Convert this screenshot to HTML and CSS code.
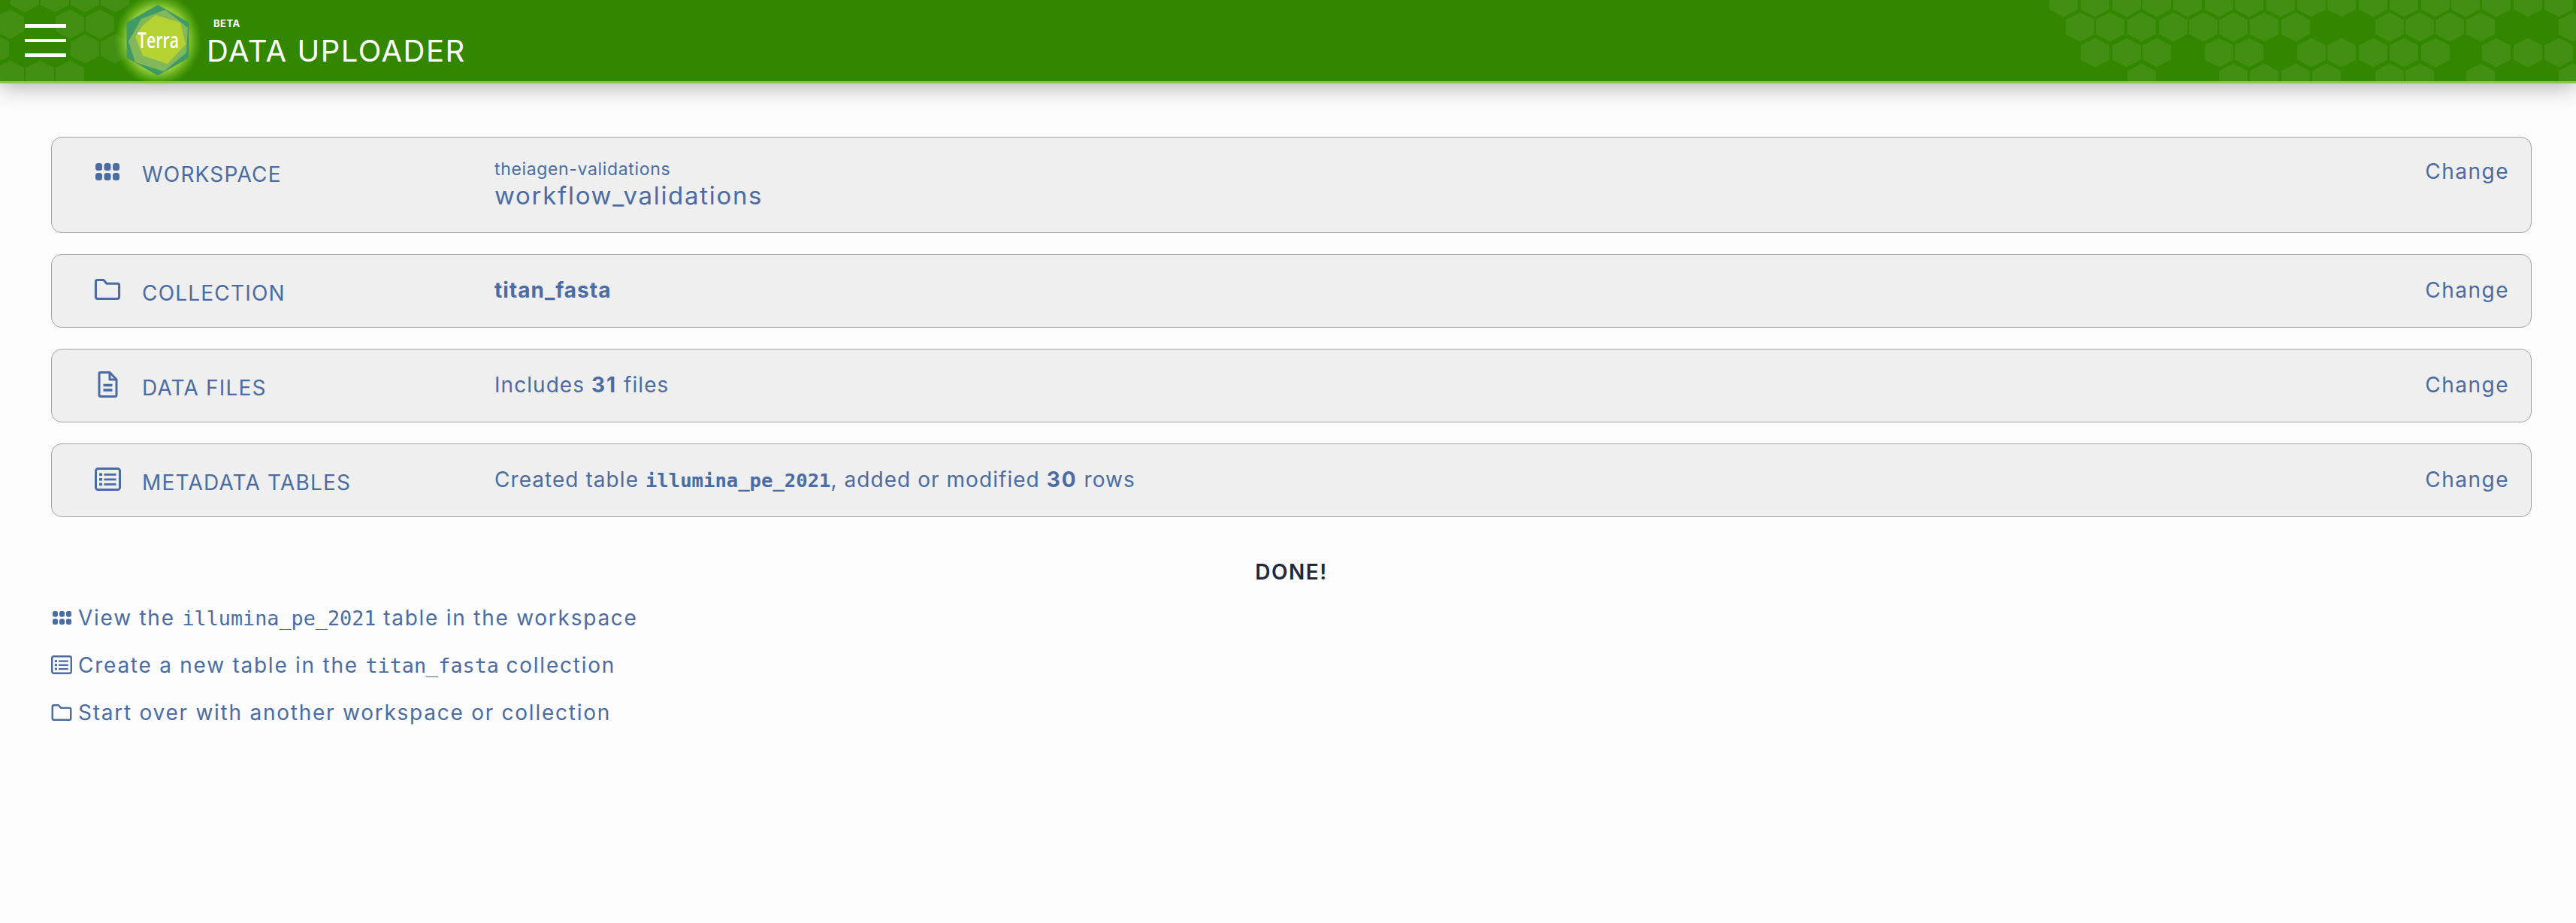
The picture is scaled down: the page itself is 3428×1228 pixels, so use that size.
FILE: index.html
```html
<!DOCTYPE html>
<html lang="en">
<head>
    <meta charset="UTF-8">
    <meta name="viewport" content="width=device-width, initial-scale=1.0">
    <title>Data Uploader</title>
    <link rel="stylesheet" href="styles.css">
</head>
<body>
    <svg class="icon-defs" width="0" height="0">
        <defs>
            <path id="hex" d="M0 -19.5L19 -9.5V9.5L0 19.5L-19 9.5V-9.5Z"/>
            <g id="i-grid">
                <rect x="0" y="0" width="9" height="10" rx="3.5"/><rect x="11.5" y="0" width="9" height="10" rx="3.5"/><rect x="23" y="0" width="9" height="10" rx="3.5"/>
                <rect x="0" y="13" width="9" height="10" rx="3.5"/><rect x="11.5" y="13" width="9" height="10" rx="3.5"/><rect x="23" y="13" width="9" height="10" rx="3.5"/>
            </g>
            <path id="i-folder" fill="none" stroke="currentColor" stroke-width="3" stroke-linejoin="round" d="M2 3.5Q2 1.5 4 1.5H12L16 6H30Q32 6 32 8V23Q32 25.5 30 25.5H4Q2 25.5 2 23Z"/>
            <g id="i-file" fill="none" stroke="currentColor" stroke-width="3" stroke-linejoin="round">
                <path d="M2 3Q2 1.5 3.5 1.5H16L25 11V31.5Q25 33.5 23 33.5H4Q2 33.5 2 31.5Z"/>
                <path d="M16 1.5V11H25"/>
                <path d="M7.5 18.5H19.5M7.5 25H19.5" stroke-width="3.4"/>
            </g>
            <g id="i-list">
                <rect x="1.5" y="1.5" width="32" height="28" rx="3" fill="none" stroke="currentColor" stroke-width="3"/>
                <rect x="6" y="7.5" width="4" height="3.6"/><rect x="6" y="14" width="4" height="3.6"/><rect x="6" y="20.5" width="4" height="3.6"/>
                <rect x="12.5" y="8" width="16" height="2.8"/><rect x="12.5" y="14.5" width="16" height="2.8"/><rect x="12.5" y="21" width="16" height="2.8"/>
            </g>
        </defs>
    </svg>

    <header class="topbar">
        <svg class="hexes hexes-left" viewBox="0 0 260 108" width="260" height="108">
            <use href="#hex" x="33" y="-3"/><use href="#hex" x="73" y="-3"/><use href="#hex" x="113" y="-3"/><use href="#hex" x="153" y="-3"/>
            <use href="#hex" x="13" y="32"/><use href="#hex" x="93" y="32"/><use href="#hex" x="133" y="32"/>
            <use href="#hex" x="-7" y="65"/><use href="#hex" x="113" y="65"/><use href="#hex" x="153" y="65"/>
            <use href="#hex" x="13" y="100"/><use href="#hex" x="53" y="100"/><use href="#hex" x="93" y="100"/>
        </svg>
        <svg class="hexes hexes-right" viewBox="2700 0 728 108" width="728" height="108">
            <use href="#hex" x="2746" y="3"/><use href="#hex" x="2788" y="3"/><use href="#hex" x="2830" y="3"/><use href="#hex" x="2870" y="3"/><use href="#hex" x="2911" y="3"/><use href="#hex" x="2953" y="3"/><use href="#hex" x="2993" y="3"/><use href="#hex" x="3035" y="3"/><use href="#hex" x="3076" y="3"/><use href="#hex" x="3116" y="3"/><use href="#hex" x="3158" y="3"/><use href="#hex" x="3199" y="3"/><use href="#hex" x="3241" y="3"/><use href="#hex" x="3281" y="3"/><use href="#hex" x="3322" y="3"/><use href="#hex" x="3364" y="3"/><use href="#hex" x="3405" y="3"/>
            <use href="#hex" x="2768" y="36"/><use href="#hex" x="2808" y="36"/><use href="#hex" x="2850" y="36"/><use href="#hex" x="2892" y="36"/><use href="#hex" x="2932" y="36"/><use href="#hex" x="2972" y="36"/><use href="#hex" x="3013" y="36"/><use href="#hex" x="3055" y="36"/><use href="#hex" x="3180" y="36"/><use href="#hex" x="3220" y="36"/><use href="#hex" x="3260" y="36"/><use href="#hex" x="3301" y="36"/><use href="#hex" x="3424" y="36"/>
            <use href="#hex" x="2788" y="70"/><use href="#hex" x="2830" y="70"/><use href="#hex" x="2870" y="70"/><use href="#hex" x="2953" y="70"/><use href="#hex" x="2993" y="70"/><use href="#hex" x="3076" y="70"/><use href="#hex" x="3116" y="70"/><use href="#hex" x="3158" y="70"/><use href="#hex" x="3199" y="70"/><use href="#hex" x="3241" y="70"/><use href="#hex" x="3322" y="70"/><use href="#hex" x="3364" y="70"/><use href="#hex" x="3405" y="70"/>
            <use href="#hex" x="2850" y="104"/><use href="#hex" x="2972" y="104"/><use href="#hex" x="3013" y="104"/><use href="#hex" x="3055" y="104"/><use href="#hex" x="3096" y="104"/><use href="#hex" x="3180" y="104"/><use href="#hex" x="3220" y="104"/><use href="#hex" x="3301" y="104"/><use href="#hex" x="3424" y="104"/>
        </svg>

        <button class="menu-button" aria-label="Menu"><span></span><span></span><span></span></button>

        <svg class="logo" viewBox="0 0 104 108" width="104" height="108">
            <defs>
                <radialGradient id="glow">
                    <stop offset="0.7" stop-color="#a9da45" stop-opacity="0.8"/>
                    <stop offset="1" stop-color="#6fc01e" stop-opacity="0"/>
                </radialGradient>
            </defs>
            <ellipse cx="52" cy="53" rx="58" ry="62" fill="url(#glow)"/>
            <path d="M52 8L92 31V76L52 99L12 76V31Z" fill="#3F9A63" stroke="#3F9A63" stroke-width="3" stroke-linejoin="round"/>
            <path d="M30 25L62 13L92 37L90 70L60 95L22 83L13 55Z" fill="#83B85A"/>
            <path d="M32 34L49 20L82 30L89 59L65 85L32 74L22 49Z" fill="#B6D232"/>
            <text x="25" y="64" class="logo-text" textLength="55" lengthAdjust="spacingAndGlyphs">Terra</text>
        </svg>

        <div class="brand">
            <div class="beta">BETA</div>
            <div class="title">DATA UPLOADER</div>
        </div>
    </header>

    <main class="content">
        <div class="steps">
            <section class="step step-tall">
                <div class="step-label">
                    <span class="icon-slot slot-grid"><svg viewBox="0 0 32 23" width="32" height="23"><use href="#i-grid"/></svg></span>
                    <span>WORKSPACE</span>
                </div>
                <div class="step-value">
                    <div class="namespace">theiagen-validations</div>
                    <div class="workspace-name">workflow_validations</div>
                </div>
                <a class="change">Change</a>
            </section>

            <section class="step">
                <div class="step-label">
                    <span class="icon-slot slot-folder"><svg viewBox="0 0 34 27" width="36" height="28"><use href="#i-folder"/></svg></span>
                    <span>COLLECTION</span>
                </div>
                <div class="step-value"><b>titan_fasta</b></div>
                <a class="change">Change</a>
            </section>

            <section class="step">
                <div class="step-label">
                    <span class="icon-slot slot-file"><svg viewBox="0 0 27 35" width="27" height="35"><use href="#i-file"/></svg></span>
                    <span>DATA FILES</span>
                </div>
                <div class="step-value">Includes <b class="count">31</b> files</div>
                <a class="change">Change</a>
            </section>

            <section class="step">
                <div class="step-label">
                    <span class="icon-slot slot-list"><svg viewBox="0 0 35 31" width="35" height="31"><use href="#i-list"/></svg></span>
                    <span>METADATA TABLES</span>
                </div>
                <div class="step-value">Created table <code>illumina_pe_2021</code>, added or modified <b class="count">30</b> rows</div>
                <a class="change">Change</a>
            </section>
        </div>

        <div class="done">DONE!</div>

        <ul class="next-links">
            <li><span class="link-icon"><svg viewBox="0 0 32 23" width="25" height="18"><use href="#i-grid"/></svg></span><span>View the <code>illumina_pe_2021</code> table in the workspace</span></li>
            <li><span class="link-icon"><svg viewBox="0 0 35 31" width="28" height="25"><use href="#i-list"/></svg></span><span>Create a new table in the <code>titan_fasta</code> collection</span></li>
            <li><span class="link-icon"><svg viewBox="0 0 34 27" width="28" height="22"><use href="#i-folder"/></svg></span><span>Start over with another workspace or collection</span></li>
        </ul>
    </main>
</body>
</html>
```

FILE: styles.css
```css
* {
    box-sizing: border-box;
}

html, body {
    margin: 0;
    height: 100%;
}

body {
    font-family: Inter, "Open Sans", sans-serif;
    background-color: #FCFCFC;
    color: #4A6CA3;
    font-size: 28px;
    letter-spacing: 1.5px;
}

b {
    letter-spacing: 1px;
}

b.count {
    letter-spacing: 2px;
}

code {
    font-family: "DejaVu Sans Mono", monospace;
    letter-spacing: 0;
}

.icon-defs {
    position: absolute;
}

/* header */
.topbar {
    position: relative;
    display: flex;
    align-items: center;
    height: 111px;
    background-color: #338700;
    border-bottom: 3px solid #86C557;
    box-shadow: 0 6px 26px rgba(0, 0, 0, 0.28);
    color: white;
}

.hexes {
    position: absolute;
    top: 0;
    fill: rgba(255, 255, 255, 0.075);
}

.hexes-left {
    left: 0;
}

.hexes-right {
    right: 0;
}

.menu-button {
    position: relative;
    display: flex;
    flex-direction: column;
    gap: 15px;
    width: 55px;
    margin-left: 33px;
    padding: 0;
    background: none;
    border: none;
}

.menu-button span {
    display: block;
    height: 4.5px;
    background-color: white;
}

.logo {
    position: relative;
    margin-left: 70px;
    overflow: visible;
}

.logo-text {
    font-family: "Open Sans", sans-serif;
    font-size: 29px;
    font-weight: 600;
    letter-spacing: 0;
    fill: white;
}

.brand {
    position: relative;
    align-self: flex-start;
    margin-left: 13px;
    padding-top: 23px;
}

.beta {
    margin-left: 9px;
    font-size: 13px;
    font-weight: 700;
    line-height: 16px;
    letter-spacing: 0.5px;
}

.title {
    margin-top: 6px;
    font-size: 40px;
    line-height: 46px;
    letter-spacing: 1.5px;
}

/* wizard steps */
.content {
    padding: 71px 59px 0 68px;
}

.steps {
    display: flex;
    flex-direction: column;
    gap: 28px;
}

.step {
    display: grid;
    grid-template-columns: 531px 1fr auto;
    align-items: start;
    height: 98px;
    padding: 30px 29px 0 58px;
    background-color: #EFEFEF;
    border: 1px solid #A3A3A3;
    border-radius: 14px;
}

.step-tall {
    height: 128px;
    padding-top: 28px;
}

.step-label {
    display: flex;
    align-items: flex-start;
    gap: 30px;
    line-height: 42px;
    letter-spacing: 1.2px;
}

.icon-slot {
    display: flex;
    justify-content: center;
    flex: none;
    width: 32px;
}

.icon-slot svg {
    flex: none;
    fill: currentColor;
}

.slot-grid {
    margin-top: 6px;
}

.slot-folder {
    margin-top: 2px;
}

.slot-file {
    margin-top: -1px;
}

.slot-list {
    margin-top: 1px;
}

.step-value {
    line-height: 34px;
    letter-spacing: 1.05px;
}

.step-value code {
    font-size: 25.6px;
    font-weight: 700;
}

.namespace {
    font-size: 23px;
    line-height: 28px;
    letter-spacing: 0.65px;
}

.workspace-name {
    font-size: 33px;
    line-height: 42px;
    letter-spacing: 1.7px;
}

.change {
    line-height: 34px;
}

/* finished */
.done {
    margin-top: 56px;
    color: #1E2A3A;
    font-weight: 600;
    text-align: center;
    line-height: 34px;
}

.next-links {
    list-style: none;
    margin: 12px 0 0;
    padding: 0;
    letter-spacing: 1.75px;
}

.next-links li {
    display: flex;
    align-items: center;
    gap: 8px;
    height: 63px;
}

.next-links code {
    font-size: 26.8px;
}

.link-icon {
    display: flex;
    justify-content: center;
    flex: none;
    width: 28px;
    fill: currentColor;
}
```
